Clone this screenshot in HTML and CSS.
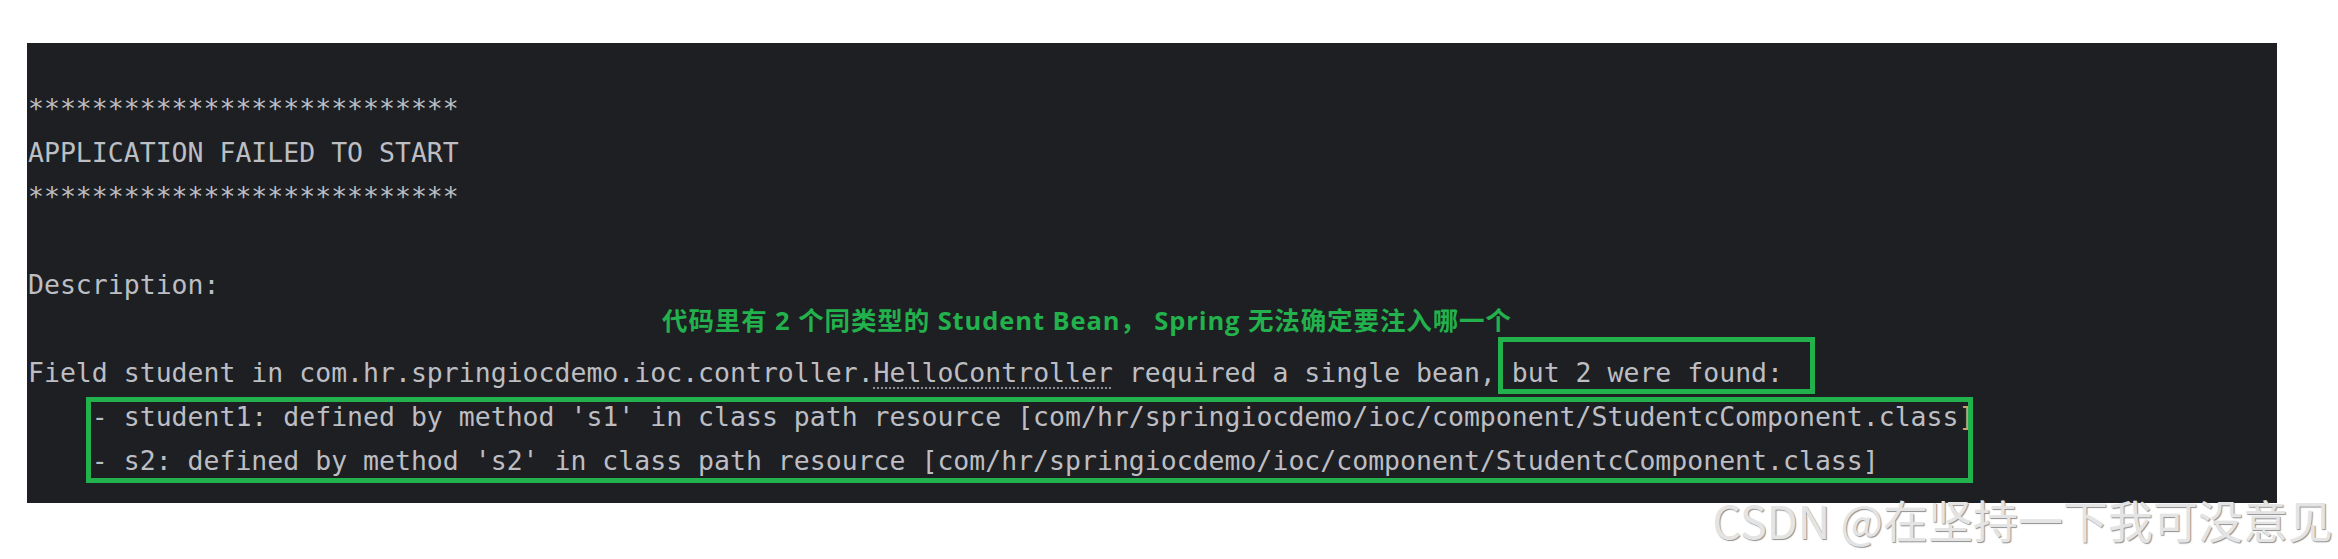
FILE: index.html
```html
<!DOCTYPE html>
<html lang="zh-CN">
<head>
<meta charset="utf-8">
<title>APPLICATION FAILED TO START</title>
<link rel="stylesheet" href="styles.css">
</head>
<body>
<div class="page">
  <div class="console">
    <div class="ln">***************************</div>
    <div class="ln">APPLICATION FAILED TO START</div>
    <div class="ln">***************************</div>
    <div class="ln"> </div>
    <div class="ln">Description:</div>
    <div class="ln"> </div>
    <div class="ln">Field student in com.hr.springiocdemo.ioc.controller.<span class="dotted">HelloController</span> required a single bean, but 2 were found:</div>
    <div class="ln">    - student1: defined by method 's1' in class path resource [com/hr/springiocdemo/ioc/component/StudentcComponent.class<span class="match">]</span></div>
    <div class="ln">    - s2: defined by method 's2' in class path resource [com/hr/springiocdemo/ioc/component/StudentcComponent.class]</div>

    <div class="note">代码里有 2 个同类型的 Student Bean， Spring 无法确定要注入哪一个</div>
    <div class="mark mark-found"></div>
    <div class="mark mark-list"></div>
  </div>
  <div class="watermark">CSDN @在坚持一下我可没意见</div>
</div>
</body>
</html>
```

FILE: styles.css
```css
html, body {
  margin: 0;
  padding: 0;
  background: #ffffff;
}

.page {
  position: relative;
  width: 2338px;
  height: 559px;
  overflow: hidden;
  padding: 43px 0 0 27px;
  box-sizing: border-box;
}

.console {
  position: relative;
  width: 2250px;
  height: 460px;
  box-sizing: border-box;
  padding: 44px 0 0 1px;
  background: #1e1f22;
  color: #bcbec4;
  font-family: "DejaVu Sans Mono", "Liberation Mono", monospace;
  font-size: 26.5px;
  line-height: 44px;
}

.ln {
  white-space: pre;
  height: 44px;
}

.dotted {
  text-decoration-line: underline;
  text-decoration-style: dotted;
  text-decoration-color: #8c8f96;
  text-decoration-thickness: 2px;
  text-underline-offset: 5px;
}

.match {
  color: #c9a26d;
}

.note {
  position: absolute;
  left: 635px;
  top: 262px;
  font-family: "Open Sans", "Noto Sans CJK SC", sans-serif;
  font-weight: 700;
  font-size: 25.5px;
  letter-spacing: 0.9px;
  line-height: 30px;
  color: #22b14c;
  white-space: pre;
}

.mark {
  position: absolute;
  border: 5px solid #22b14c;
  box-sizing: border-box;
}

.mark-found {
  left: 1471px;
  top: 294px;
  width: 317px;
  height: 57px;
}

.mark-list {
  left: 59px;
  top: 354px;
  width: 1887px;
  height: 86px;
}

.watermark {
  position: absolute;
  right: 5px;
  top: 490px;
  font-family: "Noto Sans CJK SC", sans-serif;
  font-size: 45px;
  line-height: 60px;
  color: #e4e4e4;
  text-shadow: 1px 1px 1px #8f8f8f;
  white-space: pre;
}
```
